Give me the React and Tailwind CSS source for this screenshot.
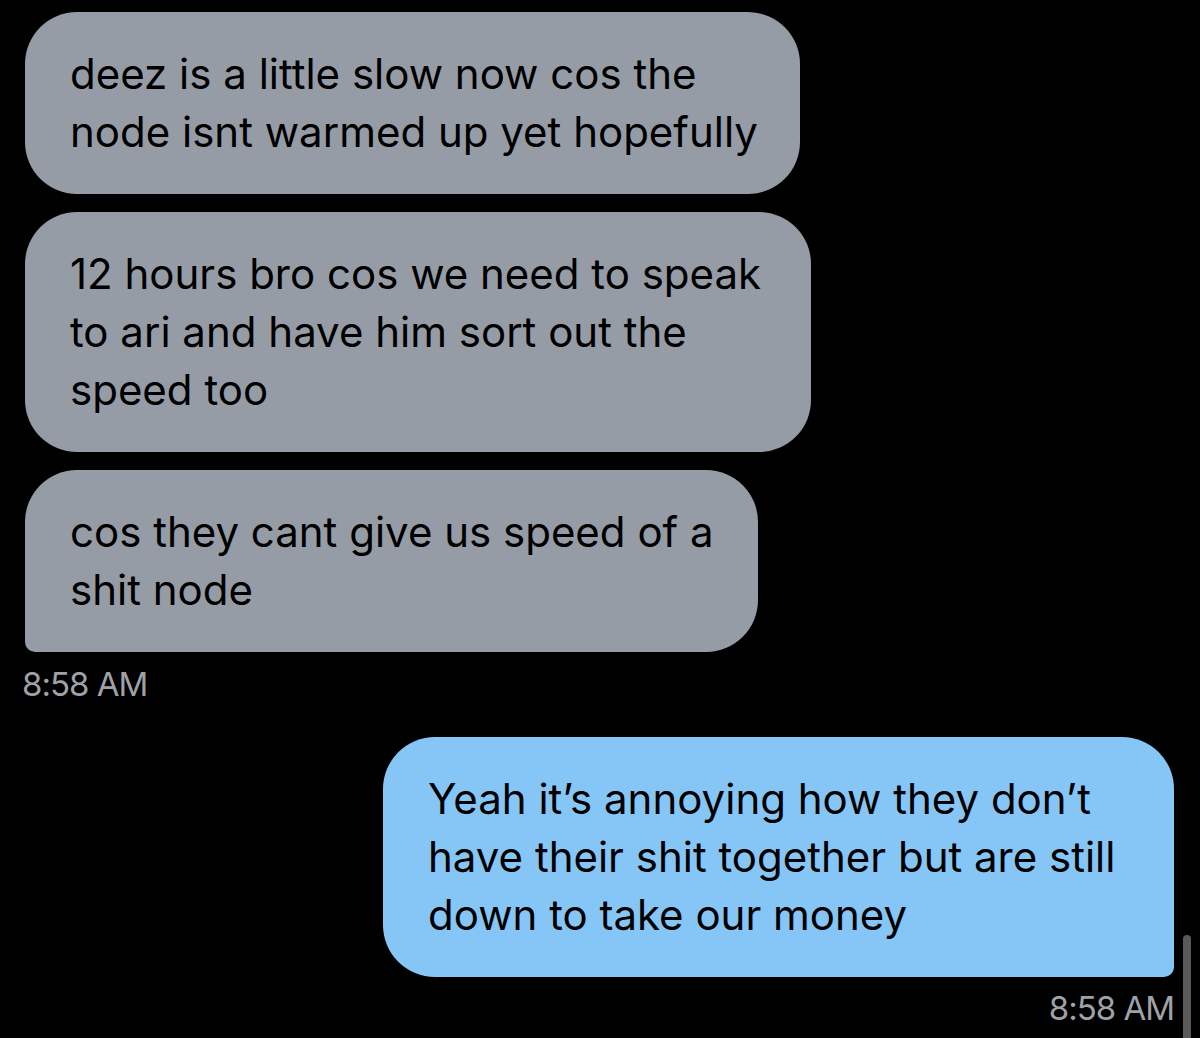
import React from "react";

const font = { fontFamily: "Inter, 'Open Sans', sans-serif" };

const incoming = [
  { lines: ["deez is a little slow now cos the", "node isnt warmed up yet hopefully"], w: "w-[775px]" },
  { lines: ["12 hours bro cos we need to speak", "to ari and have him sort out the", "speed too"], w: "w-[786px]" },
  { lines: ["cos they cant give us speed of a", "shit node"], w: "w-[733px]", last: true },
];

const Bubble = ({ lines, className }) => (
  <div className={`px-[45px] py-[33px] text-[42px] leading-[58px] tracking-[0px] text-black ${className}`}>
    {lines.map((l, i) => (
      <div key={i} className="whitespace-nowrap">
        {l}
      </div>
    ))}
  </div>
);

const App = () => {
  return (
    <div className="relative w-[1200px] h-[1038px] overflow-hidden bg-black" style={font}>
      <div className="flex flex-col pt-[12px] pl-[25px] pr-[26px]">
        <div className="flex flex-col gap-[18px]">
          {incoming.map((m, i) => (
            <Bubble
              key={i}
              lines={m.lines}
              className={`${m.w} bg-[#959ca5] ${m.last ? "rounded-[52px] rounded-bl-[10px]" : "rounded-[52px]"}`}
            />
          ))}
        </div>
        <div className="mt-[14px] -ml-[3px] text-[33px] leading-[36px] tracking-[-1px] text-[#9ea2a7]">8:58 AM</div>

        <div className="mt-[35px] flex justify-end">
          <Bubble
            lines={[
              "Yeah it’s annoying how they don’t",
              "have their shit together but are still",
              "down to take our money",
            ]}
            className="w-[791px] bg-[#86c6f7] rounded-[52px] rounded-br-[10px]"
          />
        </div>
        <div className="mt-[13px] self-end text-[33px] leading-[36px] tracking-[-1px] text-[#9ea2a7]">8:58 AM</div>
      </div>

      {/* scroll indicator */}
      <div className="absolute left-[1183px] top-[935px] w-[8px] h-[120px] rounded-full bg-[#5a5a5a]" />
    </div>
  );
};

export default App;
